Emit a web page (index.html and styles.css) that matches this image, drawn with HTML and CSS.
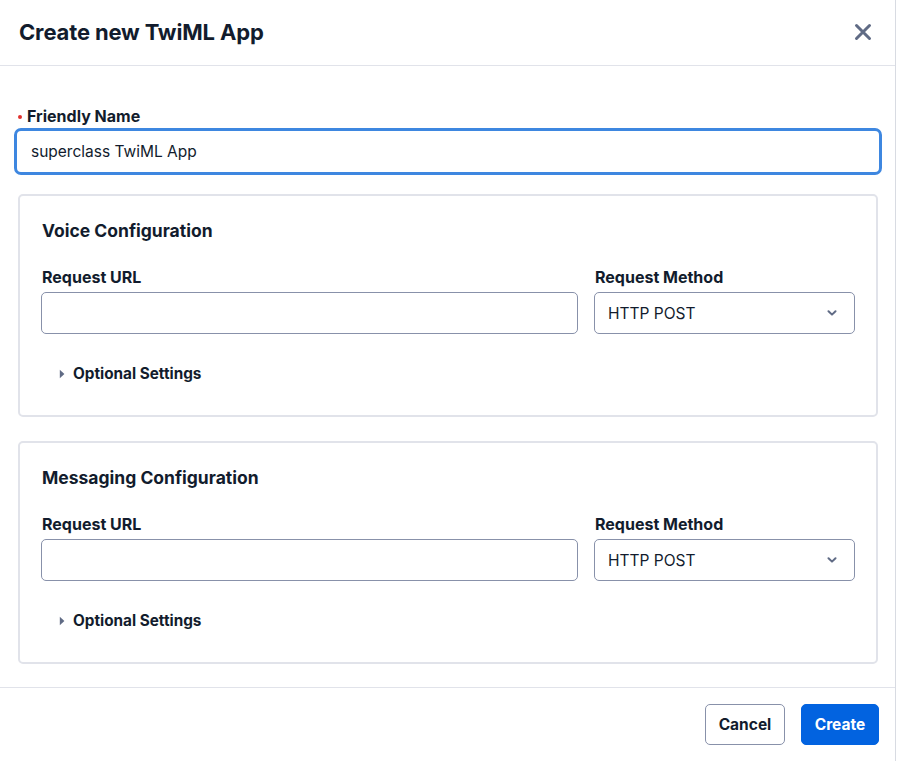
FILE: index.html
```html
<!DOCTYPE html>
<html lang="en">
<head>
<meta charset="utf-8">
<title>Create new TwiML App</title>
<link rel="stylesheet" href="styles.css">
</head>
<body>
<div class="modal">
  <header class="modal-header">
    <h1 class="modal-title">Create new TwiML App</h1>
    <button class="close-btn" aria-label="Close">
      <svg width="18" height="18" viewBox="0 0 18 18"><path d="M2.5 2.5 L15.5 15.5 M15.5 2.5 L2.5 15.5" stroke="#606b85" stroke-width="3" stroke-linecap="round" fill="none"/></svg>
    </button>
  </header>
  <main class="modal-body">
    <div class="field">
      <label class="label required">Friendly Name</label>
      <input class="input focused" type="text" value="superclass TwiML App">
    </div>

    <section class="card">
      <h2 class="card-title">Voice Configuration</h2>
      <div class="row">
        <div class="col">
          <label class="label">Request URL</label>
          <input class="input" type="text">
        </div>
        <div class="col">
          <label class="label">Request Method</label>
          <div class="select">
            <span>HTTP POST</span>
            <svg width="10" height="6" viewBox="0 0 10 6"><path d="M1.5 1.2 L5 4.6 L8.5 1.2" stroke="#606b85" stroke-width="2" fill="none" stroke-linecap="round" stroke-linejoin="round"/></svg>
          </div>
        </div>
      </div>
      <div class="optional">
        <svg width="6" height="10" viewBox="0 0 6 10"><path d="M0.8 0.8 L5.4 5 L0.8 9.2 Z" fill="#606b85"/></svg>
        <span>Optional Settings</span>
      </div>
    </section>

    <section class="card">
      <h2 class="card-title">Messaging Configuration</h2>
      <div class="row">
        <div class="col">
          <label class="label">Request URL</label>
          <input class="input" type="text">
        </div>
        <div class="col">
          <label class="label">Request Method</label>
          <div class="select">
            <span>HTTP POST</span>
            <svg width="10" height="6" viewBox="0 0 10 6"><path d="M1.5 1.2 L5 4.6 L8.5 1.2" stroke="#606b85" stroke-width="2" fill="none" stroke-linecap="round" stroke-linejoin="round"/></svg>
          </div>
        </div>
      </div>
      <div class="optional">
        <svg width="6" height="10" viewBox="0 0 6 10"><path d="M0.8 0.8 L5.4 5 L0.8 9.2 Z" fill="#606b85"/></svg>
        <span>Optional Settings</span>
      </div>
    </section>
  </main>
  <footer class="modal-footer">
    <button class="btn btn-secondary">Cancel</button>
    <button class="btn btn-primary">Create</button>
  </footer>
</div>
</body>
</html>
```

FILE: styles.css
```css
* { box-sizing: border-box; }
html, body { margin: 0; padding: 0; background: #ffffff; }
body {
  font-family: Inter, "Noto Sans", sans-serif;
  color: #121c2d;
}
.modal {
  width: 896px;
  height: 761px;
  border-right: 1px solid #d8dbe2;
  background: #fff;
  display: flex;
  flex-direction: column;
}
.modal-header {
  height: 66px;
  border-bottom: 1px solid #e1e3ea;
  display: flex;
  align-items: center;
  justify-content: space-between;
  padding: 0 23px 1px 19px;
}
.modal-title {
  margin: 0;
  font-size: 22px;
  font-weight: 700;
  line-height: 28px;
  letter-spacing: -0.15px;
}
.close-btn {
  border: 0;
  background: transparent;
  padding: 0;
  width: 18px;
  height: 18px;
  display: flex;
  cursor: pointer;
}
.modal-body {
  padding: 40px 17px 0 18px;
  height: 622px;
  border-bottom: 1px solid #e1e3ea;
}
.field { display: flex; flex-direction: column; }
.label {
  display: block;
  font-size: 16px;
  font-weight: 700;
  line-height: 20px;
  margin-bottom: 5px;
}
.label.required {
  position: relative;
  padding-left: 9px;
  margin-bottom: 2px;
}
.label.required::before {
  content: "";
  position: absolute;
  left: 0;
  top: 9px;
  width: 4px;
  height: 4px;
  border-radius: 50%;
  background: #e1312e;
}
.input {
  font-family: inherit;
  font-size: 15.5px;
  color: #121c2d;
  height: 42px;
  border: 1px solid #8891aa;
  border-radius: 5px;
  padding: 0 12px;
  width: 100%;
  outline: none;
  background: #fff;
}
.input.focused {
  height: 47px;
  border: 3px solid #3e87e0;
  border-radius: 7px;
  margin: 0 -4px;
  width: calc(100% + 8px);
  padding: 0 14px;
}
.card {
  margin-top: 19px;
  border: 2px solid #e1e3ea;
  border-radius: 5px;
  height: 223px;
  padding: 23px 21px 0 21px;
}
.card + .card { margin-top: 24px; }
.card-title {
  margin: 0 0 24px;
  padding-left: 1px;
  font-size: 17.5px;
  font-weight: 700;
  line-height: 24px;
}
.row {
  display: grid;
  grid-template-columns: 1fr 261px;
  gap: 16px;
}
.col { display: flex; flex-direction: column; }
.col .label { padding-left: 1px; }
.select {
  height: 42px;
  border: 1px solid #8891aa;
  border-radius: 5px;
  padding: 0 17px 0 13px;
  display: flex;
  align-items: center;
  justify-content: space-between;
  font-size: 15.5px;
}
.optional {
  margin-top: 30px;
  display: flex;
  align-items: center;
  gap: 8px;
  padding-left: 18px;
  font-size: 15.3px;
  font-weight: 700;
  line-height: 20px;
}
.modal-footer {
  flex: 1;
  display: flex;
  justify-content: flex-end;
  align-items: flex-start;
  gap: 16px;
  padding: 16px 16px 0 0;
}
.btn {
  font-family: inherit;
  height: 41px;
  border-radius: 5px;
  font-size: 15.5px;
  font-weight: 700;
  padding: 0 10px;
  cursor: pointer;
}
.btn-secondary {
  background: #fff;
  border: 1px solid #8891aa;
  color: #121c2d;
  width: 80px;
}
.btn-primary {
  background: #0263e0;
  border: 1px solid #0263e0;
  color: #fff;
  width: 78px;
}
```
